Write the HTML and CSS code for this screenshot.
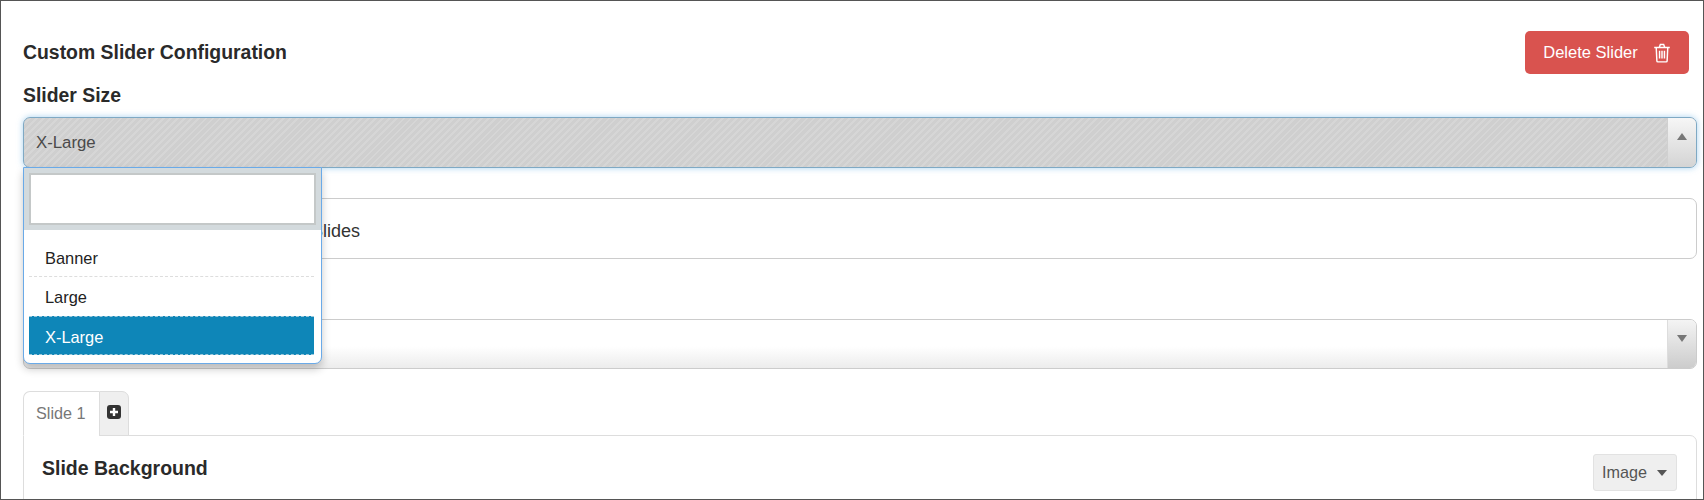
FILE: index.html
```html
<!doctype html>
<html>
<head>
	<meta charset='utf-8'>
	<title>Custom Slider Configuration</title>
	<link rel="stylesheet" href="styles.css">
</head>
<body>
<div class='config-page'>
	<div class='config-head'>
		<h3 class='config-title'>Custom Slider Configuration</h3>
		<a class='delete-btn'>Delete Slider
			<svg class='delete-icon' viewBox='0 0 16 18' width='18' height='20' fill='none' stroke='#fff' stroke-width='1.300'>
				<path d='M1 4h14M5.500 4l1-2.600h3l1 2.600M2.800 4l.6 12.200q0 .8 .9 .8h7.400q.9 0 .9-.8L13.200 4'/>
				<path d='M5.800 7v7M8 7v7M10.200 7v7'/>
			</svg>
		</a>
	</div>

	<label class='field-label'>Slider Size</label>
	<div class='select-wrap'>
		<div class='select-box select-open'>
			<span class='select-value'>X-Large</span>
			<span class='select-arrow arrow-open'><i class='tri tri-up'></i></span>
		</div>
		<div class='select-drop'>
			<div class='drop-search'><div class='drop-input'></div></div>
			<ul class='drop-list'>
				<li class='drop-item'>Banner</li>
				<li class='drop-item'>Large</li>
				<li class='drop-item drop-cur'>X-Large</li>
			</ul>
		</div>
	</div>

	<div class='text-field'>Slides</div>

	<div class='select-box select-plain'>
		<span class='select-arrow'><i class='tri tri-down'></i></span>
	</div>

	<div class='tabs'>
		<span class='tab tab-cur'>Slide 1</span>
		<span class='tab tab-add'>
			<svg viewBox='0 0 14 14' width='14' height='14'>
				<rect width='14' height='14' rx='3' fill='#333'/>
				<path d='M7 3v8M3 7h8' stroke='#fff' stroke-width='2.400'/>
			</svg>
		</span>
	</div>
	<div class='tab-panel'>
		<h3 class='panel-title'>Slide Background</h3>
		<span class='type-btn'>Image<i class='tri tri-btn'></i></span>
	</div>
</div>
</body>
</html>
```

FILE: styles.css
```css
*{margin:0;padding:0;box-sizing:border-box;}
html,body{height:100%;}
body{overflow:hidden;background:#fff;font-family:"Liberation Sans",Arial,sans-serif;color:#222;}

.config-page{height:500px;border:1px solid #555;padding:30px 6px 0 22px;overflow:hidden;}

.config-head{display:flex;justify-content:space-between;align-items:flex-start;height:43px;padding-right:8px;}
.config-title{font-size:19.400px;font-weight:bold;line-height:20px;margin-top:11px;color:#2a2a2a;}
.delete-btn{display:flex;align-items:center;justify-content:center;gap:15px;width:164px;height:43px;background:#d9534f;border-radius:5px;color:#fff;font-size:16.500px;}

.field-label{display:block;font-size:19.400px;font-weight:bold;line-height:22px;margin-top:10px;color:#2a2a2a;}

.select-wrap{position:relative;margin-top:11px;}
.select-box{display:flex;justify-content:space-between;align-items:stretch;height:50px;border:1px solid #ccc;border-radius:7px;overflow:hidden;}
.select-open{height:51px;border-color:#7fa9c4;box-shadow:0 0 6px rgba(110,180,230,.6);background:repeating-linear-gradient(135deg,#cfcfcf 0,#cfcfcf 3px,#d6d6d6 3px,#d6d6d6 5px);}
.select-plain{margin-top:60px;background:linear-gradient(#fff 55%,#ececec);}
.select-value{font-size:16.800px;line-height:49px;padding-left:12px;color:#4a4a4a;}
.select-arrow{display:flex;justify-content:center;padding-top:15px;width:29px;border-left:1px solid #ddd;background:linear-gradient(#f4f4f4,#ccc);margin-left:auto;}
.arrow-open{background:linear-gradient(#f6f6f6,#d4d4d4);border-left-color:#d0d0d0;}

.tri{display:block;width:0;height:0;border-left:5px solid transparent;border-right:5px solid transparent;}
.tri-up{border-bottom:7px solid #777;}
.tri-down{border-top:7px solid #777;}
.tri-btn{border-top:6px solid #555;margin-left:10px;}

.select-drop{position:absolute;left:0;top:50px;z-index:10;width:299px;height:197px;background:#fff;border:1px solid #6aaae8;border-radius:0 0 7px 7px;box-shadow:0 5px 8px rgba(0,0,0,.22);}
.drop-search{height:62px;padding:5px 5px 0;background:#d3dadd;}
.drop-input{height:52px;background:#fff;border:2px solid #c4c8c8;}
.drop-list{list-style:none;padding:0 7px 0 5px;}
.drop-item{height:39px;line-height:40px;font-size:16.400px;padding-left:16px;color:#222;}
.drop-item:first-child{height:47px;line-height:56px;border-bottom:1px dashed #ddd;}
.drop-cur{background:#0e86b8;color:#fff;border-top:1px dashed #9cc8dc;border-bottom:1px dashed #9cc8dc;}

.text-field{height:61px;margin-top:30px;border:1px solid #ccc;border-radius:7px;padding-left:287px;font-size:18px;line-height:64px;color:#333;}

.tabs{display:flex;height:45px;margin-top:22px;position:relative;z-index:1;}
.tab{display:flex;align-items:center;border:1px solid #ddd;border-radius:7px 7px 0 0;}
.tab-cur{width:76px;padding-left:12px;border-bottom-color:#fff;border-right:0;border-radius:7px 0 0 0;background:#fff;font-size:16.200px;color:#777;}
.tab-add{width:30px;padding-left:7px;padding-bottom:4px;background:#efefef;border-radius:0 7px 0 0;}

.tab-panel{display:flex;justify-content:space-between;align-items:flex-start;height:80px;margin-top:-1px;padding:18px 19px 0 18px;border:1px solid #ddd;border-radius:0 7px 0 0;}
.panel-title{font-size:19.500px;font-weight:bold;line-height:24px;margin-top:2px;color:#2a2a2a;}
.type-btn{display:flex;align-items:center;width:84px;height:37px;padding-left:8px;background:#efefef;border:1px solid #e2e2e2;border-radius:3px;font-size:16.200px;color:#555;}
```
